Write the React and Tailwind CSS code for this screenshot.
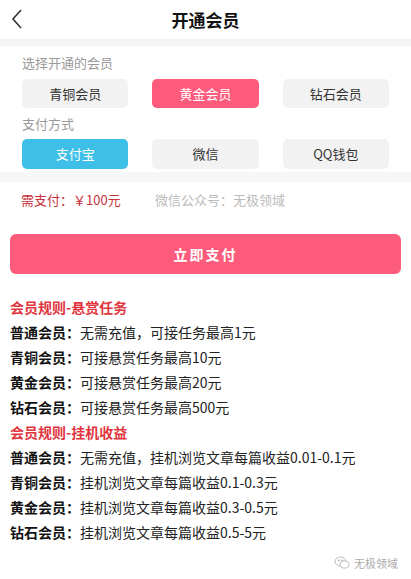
import React, { useState } from 'react';

const levels = ['青铜会员', '黄金会员', '钻石会员'];
const payments = ['支付宝', '微信', 'QQ钱包'];

const taskRules = [
  ['普通会员：', '无需充值，可接任务最高1元'],
  ['青铜会员：', '可接悬赏任务最高10元'],
  ['黄金会员：', '可接悬赏任务最高20元'],
  ['钻石会员：', '可接悬赏任务最高500元'],
];

const idleRules = [
  ['普通会员：', '无需充值，挂机浏览文章每篇收益0.01-0.1元'],
  ['青铜会员：', '挂机浏览文章每篇收益0.1-0.3元'],
  ['黄金会员：', '挂机浏览文章每篇收益0.3-0.5元'],
  ['钻石会员：', '挂机浏览文章每篇收益0.5-5元'],
];

const font = { fontFamily: '"Noto Sans CJK SC", "Noto Sans", sans-serif' };

const App = () => {
  const [level, setLevel] = useState(1);
  const [pay, setPay] = useState(0);

  return (
    <div className="w-[411px] min-h-[579px] bg-white text-[#222]" style={font}>
      <div className="relative h-[39px] flex items-center justify-center">
        <button className="absolute left-[10px] top-[8px] text-[#333]">
          <svg width="14" height="22" viewBox="0 0 14 22" fill="none" stroke="currentColor" strokeWidth="1.6">
            <path d="M11 2 L3 11 L11 20" />
          </svg>
        </button>
        <h1 className="text-[17px] font-bold text-[#111]">开通会员</h1>
      </div>
      <div className="h-[8px] bg-gradient-to-b from-[#f3f3f3] to-[#f8f8f8]" />

      <div className="px-[22px] pt-[7px] pb-[3px]">
        <div className="text-[13px] leading-[18px] text-[#999]">选择开通的会员</div>
        <div className="grid grid-cols-3 gap-x-[24px] mt-[7px]">
          {levels.map((l, i) => (
            <button
              key={l}
              onClick={() => setLevel(i)}
              className={
                'h-[29px] rounded-[5px] text-[13px] ' +
                (level === i ? 'bg-[#fd5b7b] text-white' : 'bg-[#f2f2f2] text-[#333]')
              }
            >
              {l}
            </button>
          ))}
        </div>
        <div className="text-[13px] leading-[18px] text-[#999] mt-[7px]">支付方式</div>
        <div className="grid grid-cols-3 gap-x-[24px] mt-[6px]">
          {payments.map((p, i) => (
            <button
              key={p}
              onClick={() => setPay(i)}
              className={
                'h-[30px] rounded-[5px] text-[13px] ' +
                (pay === i ? 'bg-[#3dbfe8] text-white' : 'bg-[#f2f2f2] text-[#333]')
              }
            >
              {p}
            </button>
          ))}
        </div>
      </div>
      <div className="h-[10px] bg-[#f7f7f7]" />

      <div className="flex items-center px-[21px] mt-[9px] text-[13px] leading-[18px]">
        <span className="text-[#c8323a] w-[134px]">需支付：￥100元</span>
        <span className="text-[#bbb]">微信公众号：无极领域</span>
      </div>

      <button className="mx-[10px] mt-[25px] w-[391px] h-[40px] rounded-[6px] bg-[#fd5b7b] text-white text-[14px] font-bold tracking-[2px]">
        立即支付
      </button>

      <div className="px-[10px] mt-[21px] text-[14px] leading-[25px]">
        <div className="font-bold text-[#e0353d]">会员规则-悬赏任务</div>
        {taskRules.map(([k, v]) => (
          <div key={k} className="whitespace-nowrap">
            <span className="font-bold text-[#111]">{k}</span>
            <span className="text-[#222]">{v}</span>
          </div>
        ))}
        <div className="font-bold text-[#e0353d]">会员规则-挂机收益</div>
        {idleRules.map(([k, v]) => (
          <div key={k} className="whitespace-nowrap">
            <span className="font-bold text-[#111]">{k}</span>
            <span className="text-[#222]">{v}</span>
          </div>
        ))}
      </div>

      <div className="flex justify-end items-center gap-[4px] pr-[13px] mt-[8px] h-[20px] text-[11px] text-[#aaa]">
        <svg width="16" height="14" viewBox="0 0 16 14" fill="none" stroke="#bbb" strokeWidth="1">
          <ellipse cx="6.5" cy="5.5" rx="5.5" ry="4.5" />
          <ellipse cx="10.5" cy="8.5" rx="4.5" ry="3.6" fill="white" />
          <circle cx="4.8" cy="4.4" r="0.6" fill="#bbb" />
          <circle cx="8.2" cy="4.4" r="0.6" fill="#bbb" />
        </svg>
        <span>无极领域</span>
      </div>
    </div>
  );
};

export default App;
